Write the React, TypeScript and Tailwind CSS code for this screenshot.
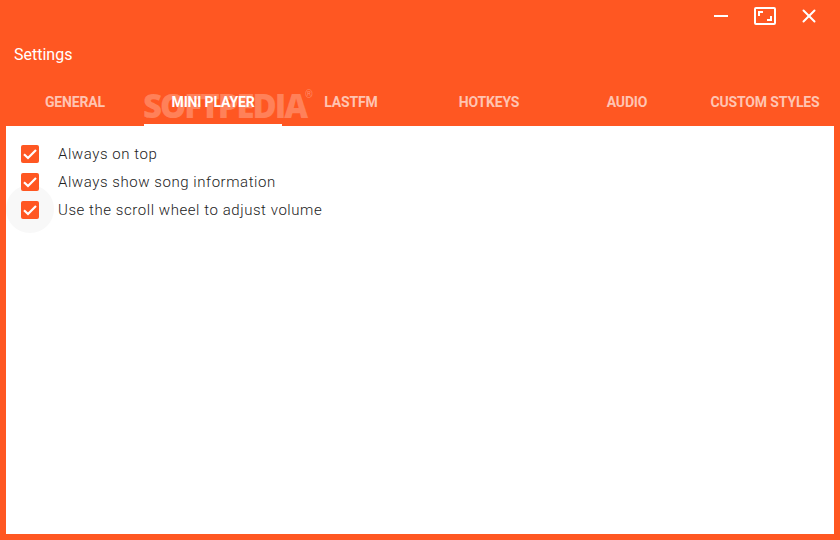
import { X } from 'lucide-react';

const tabs = ['GENERAL', 'MINI PLAYER', 'LASTFM', 'HOTKEYS', 'AUDIO', 'CUSTOM STYLES'];
const options = ['Always on top', 'Always show song information', 'Use the scroll wheel to adjust volume'];

function CheckBox() {
  return (
    <span className="flex h-[18px] w-[18px] items-center justify-center rounded-[2px] bg-[#ff5722]">
      <svg width="18" height="18" viewBox="0 0 18 18" fill="none">
        <path d="M3 9.2 L7 13 L15 5" stroke="white" strokeWidth="2.2" />
      </svg>
    </span>
  );
}

export default function App() {
  return (
    <div className="relative flex h-[540px] w-[840px] flex-col overflow-hidden bg-[#ff5722] font-['Roboto',sans-serif]">
      {/* Window controls */}
      <div className="flex h-[32px] items-center justify-end text-white">
        <svg className="mr-[26px]" width="14" height="2" viewBox="0 0 14 2">
          <rect width="14" height="2" fill="white" />
        </svg>
        <svg className="mr-[22px]" width="22" height="18" viewBox="0 0 22 18" fill="none">
          <rect x="1" y="1" width="20" height="16" rx="1" stroke="white" strokeWidth="2" />
          <path d="M5 9 V5 H9 M17 9 V13 H13" stroke="white" strokeWidth="2" />
        </svg>
        <X className="mr-[20px]" size={22} strokeWidth={2} absoluteStrokeWidth />
      </div>

      <div className="pl-[14px] pt-[13px] text-[16px] leading-[20px] text-[#fff]">Settings</div>

      {/* Tabs */}
      <div className="mx-[6px] mt-[15px] grid h-[46px] grid-cols-6">
        {tabs.map((tab, i) => (
          <div
            key={tab}
            className={`flex items-center justify-center border-b-2 text-[14px] font-bold tracking-[-0.15px] ${
              i === 1 ? 'border-white text-white' : 'border-transparent text-[#ffc4b2]'
            }`}
          >
            {tab}
          </div>
        ))}
      </div>

      {/* Watermark */}
      <div className="absolute left-[143px] top-[86px] font-['Open_Sans',sans-serif] text-[33px] font-extrabold leading-[40px] tracking-[-2px] text-white/25">
        SOFTPEDIA
      </div>
      <div className="absolute left-[305px] top-[90px] text-[10px] leading-[10px] text-white/30">®</div>

      {/* Panel */}
      <div className="relative mx-[6px] flex-1 bg-white pl-[15px] pt-[14px]">
        <span className="absolute left-0 top-[59px] h-[48px] w-[48px] rounded-full bg-[#f8f8f8]" />
        <div className="relative flex flex-col">
          {options.map((opt) => (
            <label key={opt} className="flex h-[28px] items-center">
              <CheckBox />
              <span className="ml-[19px] text-[15px] font-light tracking-[0.56px] text-[#222222]">{opt}</span>
            </label>
          ))}
        </div>
      </div>
      <div className="h-[6px]" />
    </div>
  );
}
